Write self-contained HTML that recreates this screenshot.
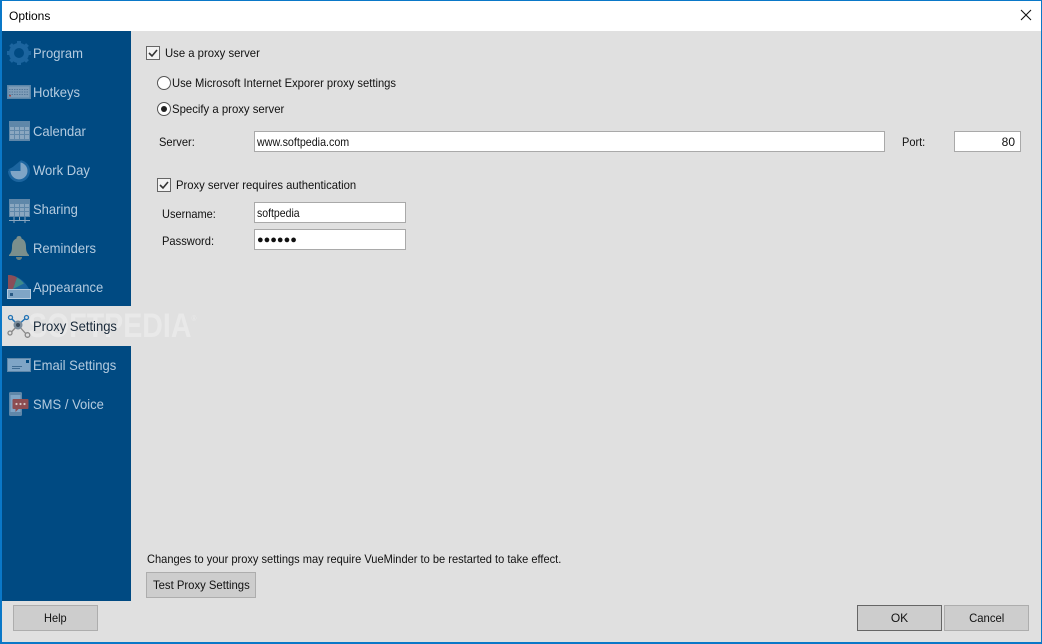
<!DOCTYPE html>
<html><head><meta charset="utf-8"><style>
html,body{margin:0;padding:0;background:#e0e0e0}
#w{position:relative;width:1042px;height:644px;overflow:hidden;background:#e0e0e0;font-family:"Liberation Sans",sans-serif;font-size:12px;color:#111}
#w div,#w svg{position:absolute}
.t{white-space:nowrap;line-height:14px;transform-origin:0 0}
.n{left:33px;font-size:14px;line-height:16px;color:#b4cbdf;white-space:nowrap;transform:scaleX(.93);transform-origin:0 0}
.i{background:#fff;border:1px solid #a9a9a9;box-sizing:border-box;line-height:20px;padding-left:2px;white-space:nowrap}
.i span{display:inline-block;transform-origin:0 0}
.b{background:#cdcdcd;border:1px solid #adadad;box-sizing:border-box;text-align:center;line-height:24px;height:26px;white-space:nowrap}
.b span{display:inline-block}
.c{width:14px;height:14px;background:#f2f2f2;border:1px solid #666;box-sizing:border-box}
.r{width:14px;height:14px;background:#fff;border:1px solid #555;border-radius:50%;box-sizing:border-box}
</style></head><body><div id="w">
<div style="left:0;top:0;width:1042px;height:31px;background:#fff"></div>
<div class="t" style="left:9px;top:9px;font-size:12px;color:#000">Options</div>
<svg style="left:1020px;top:9px" width="12" height="12" viewBox="0 0 12 12"><path d="M1 1L11 11M11 1L1 11" stroke="#111" stroke-width="1.100" fill="none"/></svg>
<div style="left:2px;top:31px;width:129px;height:570px;background:#004a82"></div>
<div style="left:2px;top:306px;width:129px;height:40px;background:#e0e0e0"></div>

<svg style="left:7px;top:41px" width="24" height="24" viewBox="0 0 24 24"><circle cx="12" cy="12" r="7.500" fill="none" stroke="#1c659f" stroke-width="5"/><path d="M12 0v5M12 19v5M0 12h5M19 12h5M3.500 3.500l3.500 3.500M17 17l3.500 3.500M3.500 20.500l3.500-3.500M17 7l3.500-3.500" stroke="#1c659f" stroke-width="4"/></svg>
<div class="n" style="top:45px">Program</div>

<svg style="left:7px;top:85px" width="24" height="14" viewBox="0 0 24 14"><rect width="24" height="14" fill="#5d86a8"/><rect x="1.500" y="1.500" width="21" height="11" fill="#7f9db8"/><path d="M2 4.500h20M2 7h20M2 9.500h20" stroke="#54799b" stroke-width="1" stroke-dasharray="1.500 1"/><rect x="2" y="10" width="2" height="1.500" fill="#a04a4a"/></svg>
<div class="n" style="top:84px">Hotkeys</div>

<svg style="left:9px;top:121px" width="21" height="20" viewBox="0 0 21 20"><rect width="21" height="20" fill="#5f87a9"/><path d="M1 6h4v3H1zM6 6h4v3H6zM11 6h4v3h-4zM16 6h4v3h-4zM1 10h4v3H1zM6 10h4v3H6zM11 10h4v3h-4zM16 10h4v3h-4zM1 14h4v4H1zM6 14h4v4H6zM11 14h4v4h-4zM16 14h4v4h-4z" fill="#8ba7c0"/></svg>
<div class="n" style="top:123px">Calendar</div>

<svg style="left:7px;top:160px" width="24" height="22" viewBox="0 0 24 22"><path d="M14 0.200A11 11 0 1 1 1 11Z" fill="#1c659f"/><path d="M14 11V2.500A8.500 8.500 0 1 1 4 11Z" fill="#7fa5c6" transform="translate(-.5 0)"/><path d="M1 9.500l5-2.500 3 4z" fill="#1c659f"/></svg>
<div class="n" style="top:162px">Work Day</div>

<svg style="left:9px;top:199px" width="21" height="24" viewBox="0 0 21 24"><rect width="21" height="18" fill="#5f87a9"/><path d="M1 5h4v3H1zM6 5h4v3H6zM11 5h4v3h-4zM16 5h4v3h-4zM1 9h4v3H1zM6 9h4v3H6zM11 9h4v3h-4zM16 9h4v3h-4zM1 13h4v4H1zM6 13h4v4H6zM11 13h4v4h-4zM16 13h4v4h-4z" fill="#8ba7c0"/><path d="M0 21.500h21M5 18v6M16 18v6M10.500 18v3" stroke="#8ba7c0" stroke-width="1" fill="none"/></svg>
<div class="n" style="top:201px">Sharing</div>

<svg style="left:8px;top:236px" width="22" height="24" viewBox="0 0 22 24"><path d="M11 0c2 0 2.500 1.500 2.500 2.500C17 4 18 7 18 11c0 4 1 6 3 8v1H1v-1c2-2 3-4 3-8 0-4 1-7 4.500-8.500C8.500 1.500 9 0 11 0z" fill="#7b8f8c"/><path d="M8 21h6c0 2-1.500 3-3 3s-3-1-3-3z" fill="#6b817f"/></svg>
<div class="n" style="top:240px">Reminders</div>

<svg style="left:7px;top:275px" width="24" height="24" viewBox="0 0 24 24"><path d="M1 0C10 0 18 6 22 14H1z" fill="#1c659f"/><path d="M1 0C5 0 8 1 10 2.500L6 14H1z" fill="#8a4e58"/><path d="M10 2.500c2.500 1.500 5 3.500 7 6L6 14z" fill="#3f8a8a"/><rect x="0" y="14" width="24" height="10" fill="#7fa5c6"/><rect x=".5" y="14.500" width="23" height="9" fill="none" stroke="#b4cbdf"/><rect x="3" y="18" width="3" height="3" fill="#2a5a85"/></svg>
<div class="n" style="top:279px">Appearance</div>

<div class="t" style="left:28px;top:299px;font-size:34px;line-height:40px;font-weight:bold;color:rgba(255,255,255,.3);transform:scaleX(.84)">SOFTPEDIA<span style="font-size:8px;vertical-align:16px;font-weight:normal">®</span></div>
<svg style="left:7px;top:314px" width="24" height="24" viewBox="0 0 24 24"><path d="M3.500 3.500L11 11M19.500 3.500L11 11" stroke="#2273b5" stroke-width="1.500"/><path d="M11 11l9 10M11 11L3.500 19" stroke="#888" stroke-width="1.300"/><circle cx="3.500" cy="3.500" r="2" fill="#e0e0e0" stroke="#2273b5" stroke-width="1.300"/><circle cx="19.500" cy="3.500" r="2" fill="#e0e0e0" stroke="#2273b5" stroke-width="1.300"/><circle cx="3" cy="19" r="2" fill="#e0e0e0" stroke="#888" stroke-width="1.300"/><circle cx="20.500" cy="21" r="2.300" fill="#e0e0e0" stroke="#888" stroke-width="1.300"/><circle cx="11" cy="11" r="4.500" fill="#7a8c9c"/><circle cx="11" cy="11" r="2" fill="#3a4a5a"/></svg>
<div class="n" style="top:318px;color:#1a2a3a">Proxy Settings</div>

<svg style="left:7px;top:358px" width="24" height="14" viewBox="0 0 24 14"><rect width="24" height="14" fill="#7fa5c6"/><rect x=".5" y=".5" width="23" height="13" fill="none" stroke="#5d86a8"/><rect x="19" y="2" width="3" height="3" fill="#004a82"/><path d="M5 8.500h10M5 10.500h8" stroke="#3f6c93" stroke-width="1"/></svg>
<div class="n" style="top:357px">Email Settings</div>

<svg style="left:9px;top:392px" width="21" height="24" viewBox="0 0 21 24"><rect width="13" height="24" rx="1.500" fill="#5f87a9"/><rect x="1.500" y="3" width="10" height="17" fill="#7fa5c6"/><path d="M6 6h14a1 1 0 0 1 1 1v8a1 1 0 0 1-1 1h-9l-3 3v-3H6a1 1 0 0 1-1-1V7a1 1 0 0 1 1-1z" fill="#8d4d52" transform="translate(-1.500 1)"/><circle cx="7.500" cy="12" r="1.100" fill="#d7c9c9"/><circle cx="11.500" cy="12" r="1.100" fill="#d7c9c9"/><circle cx="15.500" cy="12" r="1.100" fill="#d7c9c9"/></svg>
<div class="n" style="top:396px">SMS / Voice</div>

<div class="c" style="left:146px;top:46px"></div>
<svg style="left:146px;top:46px" width="14" height="14" viewBox="0 0 14 14"><path d="M3 7l3 3 5-6" fill="none" stroke="#333" stroke-width="1.600"/></svg>
<div class="t" style="left:165px;top:46px;transform:scaleX(.942)">Use a proxy server</div>
<div class="r" style="left:157px;top:76px"></div>
<div class="t" style="left:172px;top:76px;transform:scaleX(.933)">Use Microsoft Internet Exporer proxy settings</div>
<div class="r" style="left:157px;top:102px"></div>
<div style="left:161px;top:106px;width:6px;height:6px;border-radius:50%;background:#222"></div>
<div class="t" style="left:172px;top:102px;transform:scaleX(.946)">Specify a proxy server</div>
<div class="t" style="left:159px;top:135px;transform:scaleX(.925)">Server:</div>
<div class="i" style="left:254px;top:131px;width:631px;height:21px"><span style="transform:scaleX(.892)">www.softpedia.com</span></div>
<div class="t" style="left:902px;top:135px;transform:scaleX(.917)">Port:</div>
<div class="i" style="left:954px;top:131px;width:67px;height:21px;text-align:right;padding:0 5px 0 0">80</div>
<div class="c" style="left:157px;top:178px"></div>
<svg style="left:157px;top:178px" width="14" height="14" viewBox="0 0 14 14"><path d="M3 7l3 3 5-6" fill="none" stroke="#333" stroke-width="1.600"/></svg>
<div class="t" style="left:176px;top:178px;transform:scaleX(.938)">Proxy server requires authentication</div>
<div class="t" style="left:162px;top:207px;transform:scaleX(.917)">Username:</div>
<div class="i" style="left:254px;top:202px;width:152px;height:21px"><span style="transform:scaleX(.875)">softpedia</span></div>
<div class="t" style="left:162px;top:234px;transform:scaleX(.929)">Password:</div>
<div class="i" style="left:254px;top:229px;width:152px;height:21px;font-size:11px;line-height:21px">●●●●●●</div>
<div class="t" style="left:147px;top:552px;transform:scaleX(.923)">Changes to your proxy settings may require VueMinder to be restarted to take effect.</div>
<div class="b" style="left:146px;top:572px;width:110px"><span style="transform:scaleX(.942)">Test Proxy Settings</span></div>
<div class="b" style="left:13px;top:605px;width:85px"><span style="transform:scaleX(.917)">Help</span></div>
<div class="b" style="left:857px;top:605px;width:85px;border:1px solid #666">OK</div>
<div class="b" style="left:944px;top:605px;width:85px"><span style="transform:scaleX(.942)">Cancel</span></div>

<div style="left:0;top:0;width:1042px;height:644px;box-sizing:border-box;border:1px solid #0a78c8;border-width:1px 1px 2px 2px"></div>
</div></body></html>
